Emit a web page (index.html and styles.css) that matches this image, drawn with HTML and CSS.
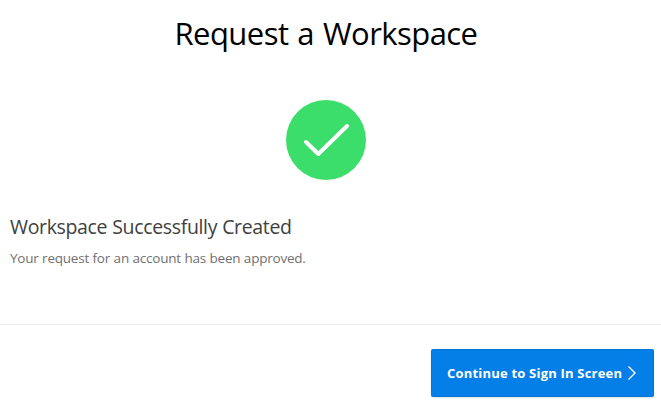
FILE: index.html
```html
<!DOCTYPE html>
<html lang="en">
<head>
<meta charset="utf-8">
<title>Request a Workspace</title>
<link rel="stylesheet" href="styles.css">
</head>
<body>
<main class="page">
  <h1 class="title">Request a Workspace</h1>
  <svg class="success" viewBox="0 0 80 80" aria-hidden="true">
    <circle cx="40" cy="40" r="40" fill="#3bdd6b"/>
    <path d="M20 42 32.300 54 61 26" fill="none" stroke="#fff" stroke-width="4" stroke-linecap="round" stroke-linejoin="round"/>
  </svg>
  <section class="message">
    <h2 class="subtitle">Workspace Successfully Created</h2>
    <p class="text">Your request for an account has been approved.</p>
  </section>
  <footer class="footer">
    <button class="button" type="button">
      <span class="button-label">Continue to Sign In Screen</span>
      <svg class="chevron" viewBox="0 0 10 16" aria-hidden="true"><path d="M1.500 1.500 8 8 1.500 14.500" fill="none" stroke="#fff" stroke-width="1.400"/></svg>
    </button>
  </footer>
</main>
</body>
</html>
```
FILE: styles.css
```css
* { box-sizing: border-box; }
body { margin: 0; background: #fff; font-family: "Open Sans", "Noto Sans", sans-serif; overflow: hidden; }
.page { height: 407px; display: flex; flex-direction: column; }
.title { margin: 12px 9px 0 0; height: 44px; line-height: 42px; font-size: 31px; font-weight: 400; letter-spacing: -0.56px; word-spacing: 1.5px; color: #000; text-align: center; white-space: nowrap; }
.success { width: 80px; height: 80px; margin: 44px 0 0 286px; flex: none; }
.message { padding: 33px 10px 0; height: 144px; white-space: nowrap; }
.subtitle { margin: 0; font-size: 19.5px; line-height: 28px; font-weight: 400; letter-spacing: -0.35px; word-spacing: 0.4px; color: #404040; }
.text { margin: 7px 0 0; font-size: 13.5px; line-height: 20px; letter-spacing: -0.23px; word-spacing: 0.3px; color: #707070; }
.footer { border-top: 1px solid #eee; display: flex; justify-content: flex-end; padding: 24px 7px 0 0; }
.button { width: 223px; height: 48px; padding: 0 16px; border: 0; border-radius: 2px; background: #057fe8; box-shadow: inset 0 0 0 1px rgba(0, 0, 0, 0.08), 0 1px 2px rgba(0, 0, 0, 0.12); color: #fff; font: 700 13px "Open Sans", sans-serif; letter-spacing: 0.2px; display: flex; align-items: center; gap: 5px; white-space: nowrap; }
.chevron { width: 10px; height: 16px; flex: none; }
```
